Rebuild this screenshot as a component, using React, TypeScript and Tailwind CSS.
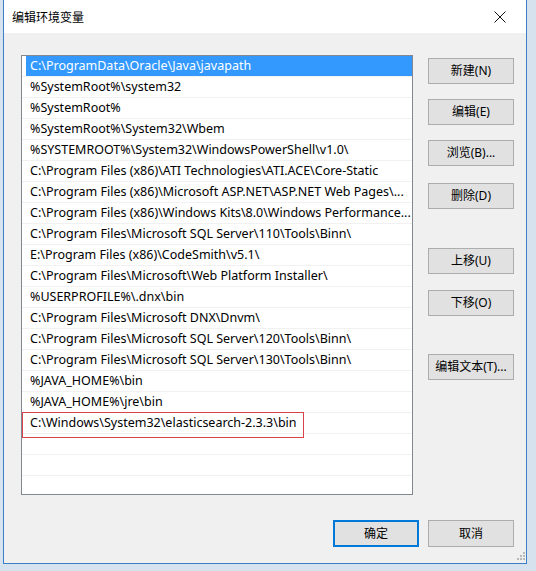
import React from "react";

const paths = [
    "C:\\ProgramData\\Oracle\\Java\\javapath",
    "%SystemRoot%\\system32",
    "%SystemRoot%",
    "%SystemRoot%\\System32\\Wbem",
    "%SYSTEMROOT%\\System32\\WindowsPowerShell\\v1.0\\",
    "C:\\Program Files (x86)\\ATI Technologies\\ATI.ACE\\Core-Static",
    "C:\\Program Files (x86)\\Microsoft ASP.NET\\ASP.NET Web Pages\\...",
    "C:\\Program Files (x86)\\Windows Kits\\8.0\\Windows Performance...",
    "C:\\Program Files\\Microsoft SQL Server\\110\\Tools\\Binn\\",
    "E:\\Program Files (x86)\\CodeSmith\\v5.1\\",
    "C:\\Program Files\\Microsoft\\Web Platform Installer\\",
    "%USERPROFILE%\\.dnx\\bin",
    "C:\\Program Files\\Microsoft DNX\\Dnvm\\",
    "C:\\Program Files\\Microsoft SQL Server\\120\\Tools\\Binn\\",
    "C:\\Program Files\\Microsoft SQL Server\\130\\Tools\\Binn\\",
    "%JAVA_HOME%\\bin",
    "%JAVA_HOME%\\jre\\bin",
    "C:\\Windows\\System32\\elasticsearch-2.3.3\\bin",
    "",
    "",
    "",
];

function Btn({ label, className = "" }: { label: string; className?: string }) {
    return (
        <div
            className={
                "w-[86px] h-[26px] flex items-center justify-center bg-[#e1e1e1] border border-[#adadad] text-[12px] text-black " +
                className
            }
        >
            {label}
        </div>
    );
}

export default function App() {
    return (
        <div
            className="w-[536px] h-[571px] bg-[#d6e2ee] overflow-hidden"
            style={{ fontFamily: '"Noto Sans", "Noto Sans CJK SC", sans-serif' }}
        >
            <div className="ml-[3px] w-[524px] h-[564px] border-l border-r border-b border-[#3b7fc4] flex flex-col bg-[#f0f0f0]">
                {/* title bar */}
                <div className="h-[33px] bg-white flex items-center justify-between pl-[8px] pr-[20px] shrink-0">
                    <span className="text-[12px] text-black" style={{ fontFamily: '"Noto Sans CJK SC", sans-serif' }}>
                        编辑环境变量
                    </span>
                    <svg width="12" height="12" viewBox="0 0 12 12">
                        <path d="M0.5 0.5 L11.5 11.5 M11.5 0.5 L0.5 11.5" stroke="#111" strokeWidth="1" />
                    </svg>
                </div>

                {/* body */}
                <div className="relative flex-1 flex flex-col pl-[17px] pt-[22px]">
                    <div className="flex">
                        <div className="relative w-[392px] h-[440px] bg-white border border-[#828790] overflow-hidden">
                            {paths.map((p, i) => (
                                <div key={i} className="h-[21px] border-b border-[#f1f1f1]">
                                    <div
                                        className={
                                            "ml-[4px] h-[20px] pl-[4px] pt-[1px] flex items-center whitespace-nowrap overflow-hidden text-[12.5px] " +
                                            (i === 0 ? "bg-[#3399ff] text-white" : "text-black")
                                        }
                                    >
                                        {p}
                                    </div>
                                </div>
                            ))}
                            {/* red annotation box */}
                            <div className="absolute left-0 top-[356px] w-[282px] h-[26px] border-[1.5px] border-[#d8434b]" />
                        </div>

                        <div className="ml-[15px] flex flex-col pt-[3px]">
                            <Btn label="新建(N)" />
                            <Btn label="编辑(E)" className="mt-[15px]" />
                            <Btn label="浏览(B)..." className="mt-[15px]" />
                            <Btn label="删除(D)" className="mt-[17px]" />
                            <Btn label="上移(U)" className="mt-[39px]" />
                            <Btn label="下移(O)" className="mt-[16px]" />
                            <Btn label="编辑文本(T)..." className="mt-[38px]" />
                        </div>
                    </div>

                    <div className="flex mt-[25px] ml-[312px] gap-[9px]">
                        <div className="w-[86px] h-[27px] flex items-center justify-center bg-[#e1e1e1] border-2 border-[#0078d7] text-[12px] text-black">
                            确定
                        </div>
                        <div className="w-[86px] h-[27px] flex items-center justify-center bg-[#e1e1e1] border border-[#adadad] text-[12px] text-black">
                            取消
                        </div>
                    </div>

                    {/* resize grip */}
                    <svg className="absolute right-[1px] bottom-[1px]" width="10" height="10" viewBox="0 0 10 10">
                        <rect x="8" y="0" width="2" height="2" fill="#b8b8b8" />
                        <rect x="5" y="3" width="2" height="2" fill="#b8b8b8" />
                        <rect x="8" y="3" width="2" height="2" fill="#b8b8b8" />
                        <rect x="2" y="6" width="2" height="2" fill="#b8b8b8" />
                        <rect x="5" y="6" width="2" height="2" fill="#b8b8b8" />
                        <rect x="8" y="6" width="2" height="2" fill="#b8b8b8" />
                    </svg>
                </div>
            </div>
        </div>
    );
}
